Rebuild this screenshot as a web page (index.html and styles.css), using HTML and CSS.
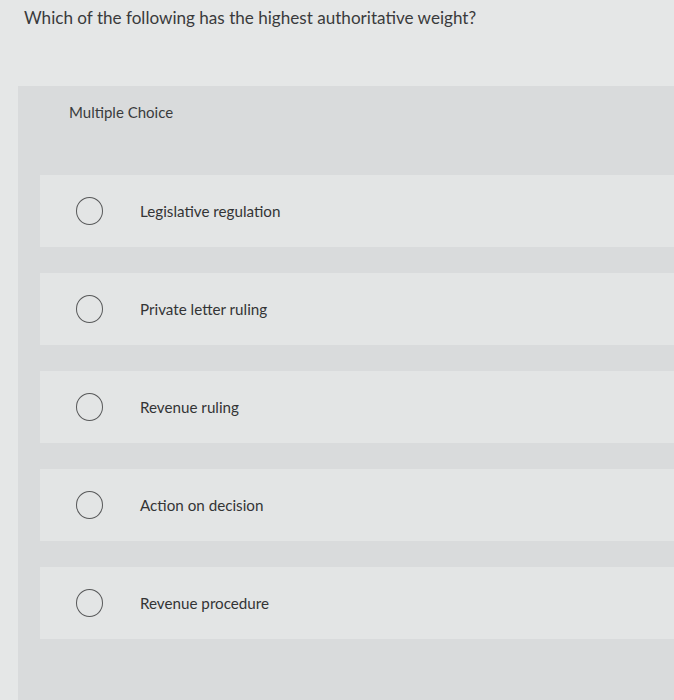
FILE: index.html
```html
<!DOCTYPE html>
<html>
<head>
<meta charset="utf-8">
<link rel="stylesheet" href="styles.css">
</head>
<body>
<div class="page">
  <p class="question">Which of the following has the highest authoritative weight?</p>
  <div class="panel">
    <div class="panel-head">Multiple Choice</div>
    <ul class="options">
      <li class="option"><span class="radio"></span><span class="label">Legislative regulation</span></li>
      <li class="option"><span class="radio"></span><span class="label">Private letter ruling</span></li>
      <li class="option"><span class="radio"></span><span class="label">Revenue ruling</span></li>
      <li class="option"><span class="radio"></span><span class="label">Action on decision</span></li>
      <li class="option"><span class="radio"></span><span class="label">Revenue procedure</span></li>
    </ul>
  </div>
</div>
</body>
</html>
```
FILE: styles.css
```css
html, body {
  margin: 0;
  padding: 0;
  background: #e5e7e7;
}
.page {
  width: 674px;
  height: 700px;
  overflow: hidden;
  font-family: Lato, "Liberation Sans", sans-serif;
}
.question {
  margin: 0;
  padding: 8px 0 0 24px;
  height: 86px;
  box-sizing: border-box;
  font-size: 17.1px;
  line-height: 20px;
  color: #3a3b3c;
}
.panel {
  margin-left: 18px;
  background: #d9dbdc;
  height: 614px;
}
.panel-head {
  height: 89px;
  box-sizing: border-box;
  padding: 17px 0 0 51px;
  font-size: 15px;
  line-height: 18px;
  color: #3a3b3c;
}
.options {
  list-style: none;
  margin: 0 0 0 22px;
  padding: 0;
  display: flex;
  flex-direction: column;
  gap: 26px;
}
.option {
  height: 72px;
  background: #e3e5e5;
  display: flex;
  align-items: center;
  padding-left: 36px;
  gap: 37px;
}
.radio {
  width: 25px;
  height: 26px;
  border: 1.5px solid #58595a;
  border-radius: 50%;
  flex: none;
}
.label {
  font-size: 15.2px;
  color: #333435;
}
```
